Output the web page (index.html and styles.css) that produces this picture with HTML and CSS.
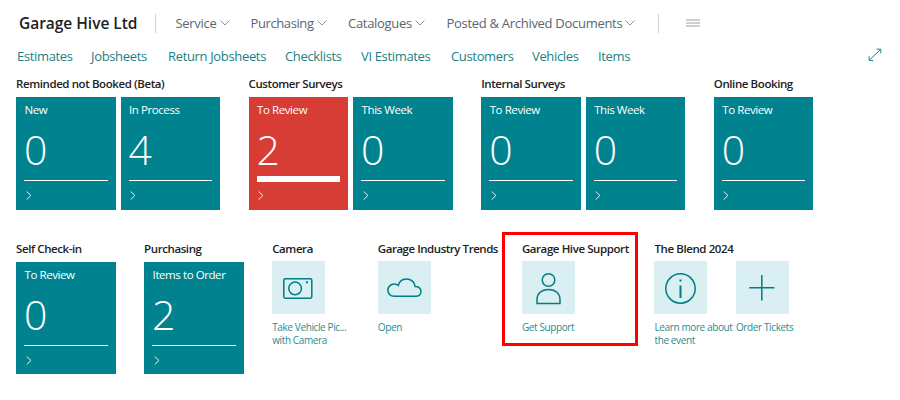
FILE: index.html
```html
<!DOCTYPE html>
<html lang="en">
<head>
<meta charset="utf-8">
<title>Garage Hive Ltd</title>
<link rel="stylesheet" href="styles.css">
</head>
<body>
<svg class="defs" width="0" height="0">
  <symbol id="down" viewBox="0 0 10 6"><path d="M.6 .6L5 5L9.4 .6"/></symbol>
  <symbol id="next" viewBox="0 0 6 9"><path d="M.7 .5L4.9 4.5L.7 8.5"/></symbol>
</svg>
<header class="topbar">
  <h1 class="company">Garage Hive Ltd</h1>
  <nav class="menu">
    <a class="menu-item service"><span>Service</span><svg class="down"><use href="#down"/></svg></a>
    <a class="menu-item purchasing"><span>Purchasing</span><svg class="down"><use href="#down"/></svg></a>
    <a class="menu-item catalogues"><span>Catalogues</span><svg class="down"><use href="#down"/></svg></a>
    <a class="menu-item documents"><span>Posted &amp; Archived Documents</span><svg class="down"><use href="#down"/></svg></a>
  </nav>
  <svg class="burger" width="14" height="8" viewBox="0 0 14 8"><path d="M0 1H14M0 4H14M0 7H14"/></svg>
</header>
<nav class="links">
  <a>Estimates</a><a>Jobsheets</a><a>Return Jobsheets</a><a>Checklists</a><a>VI Estimates</a><a>Customers</a><a>Vehicles</a><a>Items</a>
  <svg class="expand" width="14" height="14" viewBox="0 0 14 14"><path d="M1.5 12L12.5 1.5M8.5 1.2H12.8V5.3M1.2 8.3V12.4H5.3"/></svg>
</nav>
<main>
  <div class="row">
    <section class="group"><h2>Reminded not Booked (Beta)</h2><div class="tiles">
      <a class="tile"><span class="label">New</span><span class="num">0</span><i class="bar"></i><svg class="next"><use href="#next"/></svg></a>
      <a class="tile"><span class="label">In Process</span><span class="num">4</span><i class="bar"></i><svg class="next"><use href="#next"/></svg></a>
    </div></section>
    <section class="group"><h2>Customer Surveys</h2><div class="tiles">
      <a class="tile alert"><span class="label">To Review</span><span class="num">2</span><i class="bar"></i><svg class="next"><use href="#next"/></svg></a>
      <a class="tile"><span class="label">This Week</span><span class="num">0</span><i class="bar"></i><svg class="next"><use href="#next"/></svg></a>
    </div></section>
    <section class="group"><h2>Internal Surveys</h2><div class="tiles">
      <a class="tile"><span class="label">To Review</span><span class="num">0</span><i class="bar"></i><svg class="next"><use href="#next"/></svg></a>
      <a class="tile"><span class="label">This Week</span><span class="num">0</span><i class="bar"></i><svg class="next"><use href="#next"/></svg></a>
    </div></section>
    <section class="group"><h2>Online Booking</h2><div class="tiles">
      <a class="tile"><span class="label">To Review</span><span class="num">0</span><i class="bar"></i><svg class="next"><use href="#next"/></svg></a>
    </div></section>
  </div>
  <div class="row second">
    <section class="group"><h2>Self Check-in</h2><div class="tiles">
      <a class="tile"><span class="label">To Review</span><span class="num">0</span><i class="bar"></i><svg class="next"><use href="#next"/></svg></a>
    </div></section>
    <section class="group"><h2>Purchasing</h2><div class="tiles">
      <a class="tile"><span class="label">Items to Order</span><span class="num">2</span><i class="bar"></i><svg class="next"><use href="#next"/></svg></a>
    </div></section>
    <section class="group camera"><h2>Camera</h2><div class="tiles">
      <a class="action"><svg class="icon" viewBox="0 0 53 53"><rect x="11.8" y="17.8" width="28" height="19.4" rx="1.4"/><circle cx="23.1" cy="27.4" r="6.3"/><path class="dot" d="M34 20.3h2v2h-2z"/></svg><span class="caption">Take Vehicle Pic...<br>with Camera</span></a>
    </div></section>
    <section class="group trends"><h2>Garage Industry Trends</h2><div class="tiles">
      <a class="action"><svg class="icon" viewBox="0 0 53 53"><path d="M16 35.3C12.4 35.3 9.9 32.5 9.9 29.3C9.9 25.7 12.7 23.1 16 23.1C17.7 23.1 19 23.6 20.2 24.5C21.2 20.6 24.5 17.9 28.3 17.9C33.3 17.9 36.7 21.4 37.1 25.6C40.6 25.5 43 27.5 43 30.3C43 33.2 40.8 35.3 38 35.3Z"/></svg><span class="caption">Open</span></a>
    </div></section>
    <section class="group support"><h2>Garage Hive Support</h2><div class="tiles">
      <a class="action"><svg class="icon" viewBox="0 0 53 53"><circle cx="26.5" cy="19" r="6.3"/><path d="M15 42.4V38.5C15 32.5 19.5 28.5 26.5 28.5S38 32.5 38 38.5V42.4Z"/></svg><span class="caption">Get Support</span></a>
    </div></section>
    <section class="group blend"><h2>The Blend 2024</h2><div class="tiles">
      <a class="action info"><svg class="icon" viewBox="0 0 53 53"><circle cx="26.5" cy="27.5" r="14.7"/><path class="stem" d="M26.5 24.6V36.9M26.5 18.4V20.5"/></svg><span class="caption">Learn more about<br>the event</span></a>
      <a class="action"><svg class="icon" viewBox="0 0 53 53"><path d="M13.2 26.7H38.4M25.8 14V39.5"/></svg><span class="caption">Order Tickets</span></a>
    </div></section>
  </div>
</main>
</body>
</html>
```
FILE: styles.css
```css
*, *::after { box-sizing: border-box; }
body { margin: 0; width: 900px; height: 400px; overflow: hidden; background: #fff; font-family: "Open Sans", "Noto Sans", sans-serif; color: #212121; }
svg { display: block; fill: none; flex: none; }
.defs { position: absolute; }
h1, h2 { margin: 0; white-space: nowrap; }
.topbar { display: flex; align-items: center; height: 46px; padding-left: 19px; }
.company { font-size: 15.5px; font-weight: 600; width: 136px; line-height: 20px; letter-spacing: -.03px; }
.menu { display: flex; align-items: center; height: 19px; border: solid #d2d2d2; border-width: 0 1px; width: 504px; padding-left: 19.5px; }
.menu-item { display: flex; align-items: center; gap: 3px; font-size: 13px; letter-spacing: -.29px; color: #596672; white-space: nowrap; }
.service { width: 75px; }
.purchasing { width: 97.5px; letter-spacing: -.4px; }
.catalogues { width: 98.5px; letter-spacing: -.3px; }
.down { width: 10px; height: 6px; stroke: #8a949e; }
.burger { margin: 0 0 1px 27px; stroke: #9aa2ab; stroke-width: 1.2; }
.links { display: grid; grid-template-columns: 74px 77px 117px 76px 90px 81px 66px 270px 14px; align-items: center; padding-left: 17px; height: 20px; font-size: 13px; letter-spacing: -.34px; color: #1c7f84; white-space: nowrap; }
.links a { margin-top: -1px; }
.expand { stroke: #16888d; margin-top: -2px; }
.row { display: flex; gap: 28.6px; padding-left: 16px; margin-top: 9px; }
.row.second { margin-top: 30px; }
.group { position: relative; }
.group h2 { font-size: 11.5px; line-height: 18px; height: 22px; font-weight: 600; letter-spacing: -.41px; }
.tiles { display: flex; gap: 5px; }
.tile { display: flex; flex-direction: column; width: 99.5px; height: 112.5px; padding: 5px 8px; background: #00838f; color: #fff; }
.alert { background: #d73c35; }
.label { font-size: 11.5px; line-height: 16px; letter-spacing: -.42px; white-space: nowrap; padding-left: .5px; }
.num { font-size: 41px; line-height: 50px; height: 58px; padding-top: 6px; font-weight: 300; }
.bar { height: 1px; background: #fff; margin-top: 4px; }
.alert .bar { height: 6px; margin: 0 0 -1px; }
.next { width: 6px; height: 9px; margin: 10px 0 0 1.7px; stroke: #e1f5f7; }
.camera { width: 77px; }
.trends { width: 115.5px; }
.trends h2 { letter-spacing: -.46px; }
.support { width: 104px; }
.support::after { content: ""; position: absolute; left: -20px; top: -8px; width: 136px; height: 114px; border: 3px solid #fe0000; }
.action { width: 53px; margin-top: -.6px; color: #2b8b90; }
.info { width: 76.5px; }
.icon { width: 53px; height: 53px; background: #d9eff1; stroke: #007d85; stroke-width: 1.5; }
.dot { fill: #007d85; stroke: none; }
.stem { stroke-width: 2; }
.caption { display: block; margin-top: 7.4px; font-size: 10px; line-height: 13px; letter-spacing: -.38px; white-space: nowrap; }
```
